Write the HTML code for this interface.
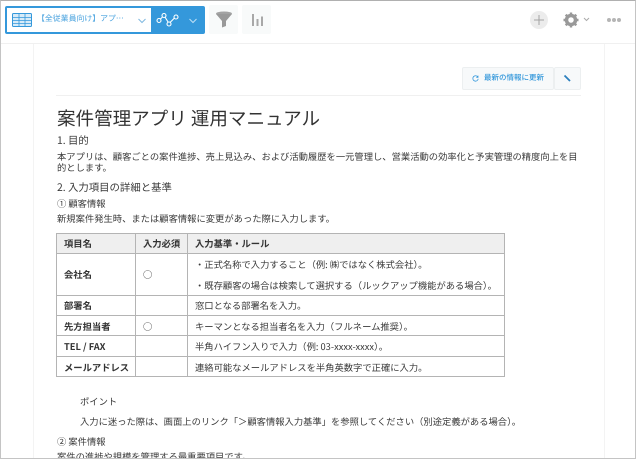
<!DOCTYPE html>
<html lang="ja"><head><meta charset="utf-8">
<style>
html,body{margin:0;padding:0;background:#fff}
#p{position:relative;width:636px;height:459px;overflow:hidden;background:#fff;font-family:"Noto Sans CJK JP","Liberation Sans",sans-serif;color:#333;text-rendering:geometricPrecision}
#p div{position:absolute;box-sizing:border-box}
.t{white-space:nowrap;font-size:9.300px;line-height:12px;color:#3a3a3a}
.h{font-size:10.400px;line-height:14px}
.b{font-weight:700;color:#333}
.l{background:#b4b4b4}
</style></head><body><div id="p">
<div style="left:33px;top:44px;width:572px;height:415px;border-left:1px solid #f3f3f3;border-right:1px solid #f3f3f3"></div>
<div style="left:0;top:43px;width:636px;height:1px;background:#f0f0f0"></div>

<div style="left:5px;top:6px;width:200px;height:28px;background:#3498db;border-radius:2px"></div>
<div style="left:7px;top:8px;width:144px;height:24px;background:#fff"></div>
<svg style="position:absolute;left:12px;top:13px" width="20" height="14" viewBox="0 0 20 14"><rect x=".5" y=".5" width="19" height="13" rx="1" fill="#d7ebf8" stroke="#3498db"/><path d="M1 4.500H19M1 7.500H19M1 10.500H19M7 1V13M13 1V13" stroke="#3498db" stroke-width=".8" fill="none"/></svg>
<div class="t" style="left:37px;top:13px;font-size:7.900px;color:#4aa3df">【全従業員向け】アプ…</div>
<svg style="position:absolute;left:137px;top:17px" width="10" height="8" viewBox="0 0 10 8"><path d="M1.500 2L5 5.500 8.500 2" stroke="#7fb8e0" fill="none" stroke-width="1"/></svg>
<svg style="position:absolute;left:156px;top:12px" width="25" height="16" viewBox="0 0 25 16"><path d="M3 8.500L8 3.500 13 11.500 19.500 5" stroke="#fff" fill="none" stroke-width="1.100"/><g fill="#3498db" stroke="#fff" stroke-width="1.100"><circle cx="3" cy="8.500" r="2"/><circle cx="8" cy="3.500" r="2"/><circle cx="13" cy="12" r="2"/><circle cx="20" cy="5" r="2"/></g></svg>
<svg style="position:absolute;left:188px;top:17px" width="10" height="8" viewBox="0 0 10 8"><path d="M1.500 2L5 5.500 8.500 2" stroke="#bfe0f5" fill="none" stroke-width="1"/></svg>

<div style="left:209px;top:5px;width:29px;height:29px;background:#f8fafa;border-radius:2px"></div>
<svg style="position:absolute;left:215px;top:11px" width="18" height="18" viewBox="0 0 18 18"><ellipse cx="9" cy="2.500" rx="8" ry="2" fill="#a3a3a3"/><path d="M1 3L7 10V16.500L11 15V10L17 3Z" fill="#999"/></svg>
<div style="left:242px;top:5px;width:29px;height:29px;background:#f8fafa;border-radius:2px"></div>
<svg style="position:absolute;left:250px;top:13px" width="14" height="14" viewBox="0 0 14 14"><path d="M3 1V13M7.500 6V13M12 3.500V13" stroke="#a8a8a8" stroke-width="2" fill="none"/></svg>

<div style="left:530px;top:11px;width:18px;height:18px;border-radius:50%;background:#ececec"></div>
<svg style="position:absolute;left:533px;top:14px" width="12" height="12" viewBox="0 0 12 12"><path d="M6 1V11M1 6H11" stroke="#a3a3a3" stroke-width="1"/></svg>
<svg style="position:absolute;left:563px;top:12px" width="16" height="16" viewBox="0 0 16 16"><circle cx="8" cy="8" r="4.500" fill="none" stroke="#999" stroke-width="3.500"/><path d="M8 .5V3M8 13V15.500M.5 8H3M13 8H15.500M2.700 2.700L4.500 4.500M11.500 11.500L13.300 13.300M2.700 13.300L4.500 11.500M11.500 4.500L13.300 2.700" stroke="#999" stroke-width="2.400"/></svg>
<svg style="position:absolute;left:583px;top:17px" width="7" height="5" viewBox="0 0 7 5"><path d="M1 1L3.500 3.500 6 1" stroke="#aaa" fill="none"/></svg>
<div style="left:607px;top:18px;width:4px;height:4px;border-radius:50%;background:#b5b5b5"></div>
<div style="left:612px;top:18px;width:4px;height:4px;border-radius:50%;background:#b5b5b5"></div>
<div style="left:617px;top:18px;width:4px;height:4px;border-radius:50%;background:#b5b5b5"></div>

<div style="left:462px;top:67px;width:92px;height:23px;background:#f7f9fa;border:1px solid #eceff0;border-radius:2px"></div>
<svg style="position:absolute;left:472px;top:75px" width="7" height="7" viewBox="0 0 7 7"><path d="M5.800 2A2.700 2.700 0 1 0 6.200 3.800M6 .6V2.300H4.300" stroke="#3498db" fill="none" stroke-width=".8"/></svg>
<div class="t" style="left:484px;top:72px;font-size:7.500px;font-weight:500;color:#3498db;line-height:12px">最新の情報に更新</div>
<div style="left:554px;top:67px;width:27px;height:23px;background:#f7f9fa;border:1px solid #eceff0;border-radius:2px"></div>
<svg style="position:absolute;left:563px;top:74px" width="9" height="9" viewBox="0 0 9 9"><path d="M1.500 1.500L7 7" stroke="#2b7fbd" stroke-width="1.800"/></svg>
<div style="left:56px;top:95px;width:525px;height:1px;background:#f0f0f0"></div>

<div class="t" style="left:57px;top:105px;font-size:18.550px;line-height:26px;color:#333">案件管理アプリ 運用マニュアル</div>
<div class="t h" style="left:57px;top:133px">1. 目的</div>
<div class="t" style="left:57px;top:150px">本アプリは、顧客ごとの案件進捗、売上見込み、および活動履歴を一元管理し、営業活動の効率化と予実管理の精度向上を目</div>
<div class="t" style="left:57px;top:161px">的とします。</div>
<div class="t h" style="left:57px;top:180px">2. 入力項目の詳細と基準</div>
<div class="t" style="left:57px;top:197px">① 顧客情報</div>
<div class="t" style="left:57px;top:212px">新規案件発生時、または顧客情報に変更があった際に入力します。</div>

<div style="left:56px;top:233px;width:449px;height:20px;background:#efefef"></div>
<div class="l" style="left:56px;top:233px;width:449px;height:1px"></div>
<div class="l" style="left:56px;top:253px;width:449px;height:1px"></div>
<div class="l" style="left:56px;top:295px;width:449px;height:1px"></div>
<div class="l" style="left:56px;top:315px;width:449px;height:1px"></div>
<div class="l" style="left:56px;top:335px;width:449px;height:1px"></div>
<div class="l" style="left:56px;top:356px;width:449px;height:1px"></div>
<div class="l" style="left:56px;top:376px;width:449px;height:1px"></div>
<div class="l" style="left:56px;top:233px;width:1px;height:144px"></div>
<div class="l" style="left:135px;top:233px;width:1px;height:144px"></div>
<div class="l" style="left:187px;top:233px;width:1px;height:144px"></div>
<div class="l" style="left:504px;top:233px;width:1px;height:144px"></div>

<div class="t b" style="left:64px;top:237px">項目名</div>
<div class="t b" style="left:143px;top:237px">入力必須</div>
<div class="t b" style="left:195px;top:237px">入力基準・ルール</div>
<div class="t b" style="left:64px;top:268px">会社名</div>
<div class="t" style="left:143px;top:268px">○</div>
<div class="t" style="left:195px;top:258px">・正式名称で入力すること（例: ㈱ではなく株式会社）。</div>
<div class="t" style="left:195px;top:279px">・既存顧客の場合は検索して選択する（ルックアップ機能がある場合）。</div>
<div class="t b" style="left:64px;top:299px">部署名</div>
<div class="t" style="left:195px;top:299px">窓口となる部署名を入力。</div>
<div class="t b" style="left:64px;top:320px">先方担当者</div>
<div class="t" style="left:143px;top:320px">○</div>
<div class="t" style="left:195px;top:320px">キーマンとなる担当者名を入力（フルネーム推奨）。</div>
<div class="t b" style="left:64px;top:340px">TEL / FAX</div>
<div class="t" style="left:195px;top:340px">半角ハイフン入りで入力（例: 03-xxxx-xxxx）。</div>
<div class="t b" style="left:64px;top:361px">メールアドレス</div>
<div class="t" style="left:195px;top:361px">連絡可能なメールアドレスを半角英数字で正確に入力。</div>

<div class="t" style="left:80px;top:395px">ポイント</div>
<div class="t" style="left:80px;top:415px">入力に迷った際は、画面上のリンク「＞顧客情報入力基準」を参照してください（別途定義がある場合）。</div>
<div class="t" style="left:57px;top:435px">② 案件情報</div>
<div class="t" style="left:57px;top:450px">案件の進捗や規模を管理する最重要項目です。</div>

<div style="left:0;top:0;width:636px;height:459px;border:1px solid #c4c4c4;border-top:1px solid #b0b0b0"></div>
</div></body></html>
